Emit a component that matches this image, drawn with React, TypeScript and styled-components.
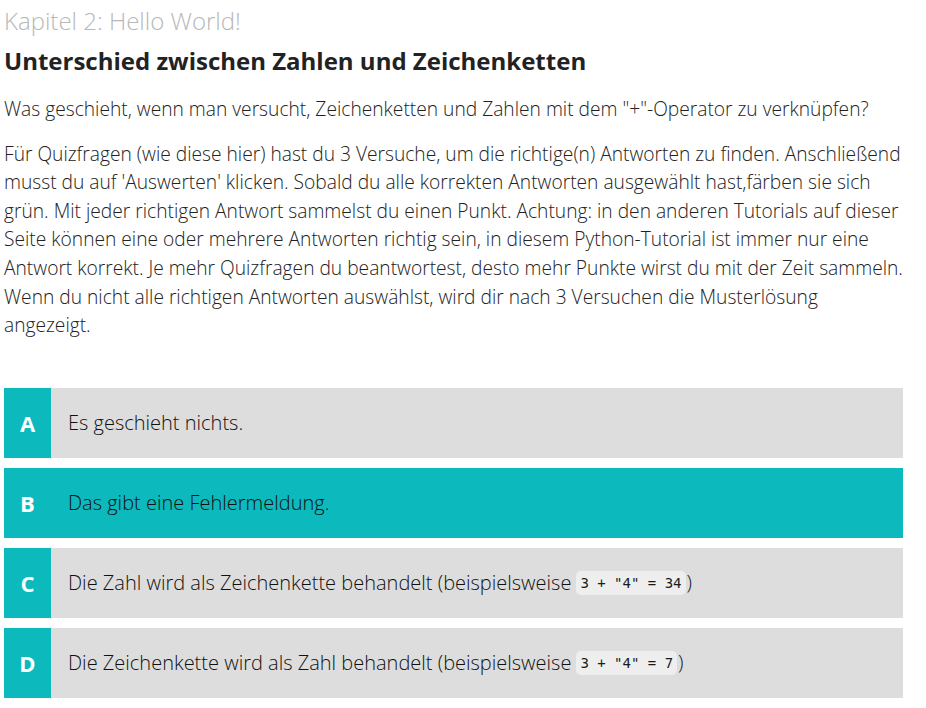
import React from "react";
import styled, { createGlobalStyle } from "styled-components";

const Global = createGlobalStyle`
  html, body { margin: 0; padding: 0; background: #fff; }
  body { font-family: "Open Sans", "Liberation Sans", sans-serif; color: #333; }
`;

const Page = styled.div`
  padding: 4px 23px 0 4px;
`;

const Chapter = styled.div`
  font-size: 24px;
  font-weight: 300;
  color: #b8b8b8;
  line-height: 32px;
  margin-top: 1px;
`;

const Heading = styled.h2`
  font-size: 24px;
  font-weight: 700;
  color: #222;
  margin: 8px 0 0;
  line-height: 32px;
`;

const Para = styled.p<{ $top: number }>`
  font-size: 19.2px;
  font-weight: 300;
  line-height: 28.6px;
  color: #222;
  margin: ${(p) => p.$top}px 0 0;
`;

const Answers = styled.div`
  display: flex;
  flex-direction: column;
  gap: 10px;
  margin-top: 48px;
`;

const Row = styled.div<{ $active?: boolean }>`
  display: flex;
  align-items: stretch;
  height: 70px;
  background: ${(p) => (p.$active ? "#0cb9bd" : "#dddddd")};
`;

const Letter = styled.div`
  width: 47px;
  flex: none;
  background: #0cb9bd;
  color: #fff;
  font-weight: 700;
  font-size: 22px;
  display: flex;
  align-items: center;
  justify-content: center;
`;

const AnswerText = styled.div`
  display: flex;
  align-items: center;
  padding-left: 17px;
  font-size: 20px;
  font-weight: 300;
  color: #111;
`;

const Code = styled.code`
  font-family: "DejaVu Sans Mono", "Liberation Mono", monospace;
  font-size: 14px;
  font-weight: 400;
  background: #eeeeee;
  border-radius: 5px;
  padding: 4px 4px;
  margin: 0 1px 0 5px;
  color: #1a1a1a;
`;

export default function App() {
  return (
    <Page>
      <Global />
      <Chapter>Kapitel 2: Hello World!</Chapter>
      <Heading>Unterschied zwischen Zahlen und Zeichenketten</Heading>
      <Para $top={18}>
        Was geschieht, wenn man versucht, Zeichenketten und Zahlen mit dem "+"-Operator zu verknüpfen?
      </Para>
      <Para $top={16}>
        Für Quizfragen (wie diese hier) hast du 3 Versuche, um die richtige(n) Antworten zu finden. Anschließend
        musst du auf 'Auswerten' klicken. Sobald du alle korrekten Antworten ausgewählt hast,färben sie sich
        grün. Mit jeder richtigen Antwort sammelst du einen Punkt. Achtung: in den anderen Tutorials auf dieser
        Seite können eine oder mehrere Antworten richtig sein, in diesem Python-Tutorial ist immer nur eine
        Antwort korrekt. Je mehr Quizfragen du beantwortest, desto mehr Punkte wirst du mit der Zeit sammeln.
        Wenn du nicht alle richtigen Antworten auswählst, wird dir nach 3 Versuchen die Musterlösung
        angezeigt.
      </Para>
      <Answers>
        <Row>
          <Letter>A</Letter>
          <AnswerText>Es geschieht nichts.</AnswerText>
        </Row>
        <Row $active>
          <Letter>B</Letter>
          <AnswerText>Das gibt eine Fehlermeldung.</AnswerText>
        </Row>
        <Row>
          <Letter>C</Letter>
          <AnswerText>
            Die Zahl wird als Zeichenkette behandelt (beispielsweise<Code>3 + "4" = 34</Code>)
          </AnswerText>
        </Row>
        <Row>
          <Letter>D</Letter>
          <AnswerText>
            Die Zeichenkette wird als Zahl behandelt (beispielsweise<Code>3 + "4" = 7</Code>)
          </AnswerText>
        </Row>
      </Answers>
    </Page>
  );
}
